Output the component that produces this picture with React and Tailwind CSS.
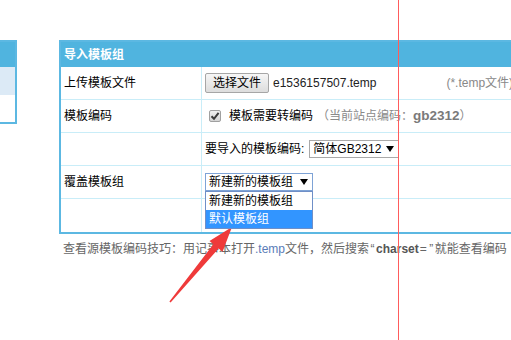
import React from "react";

const font = { fontFamily: '"Liberation Sans", "Noto Sans CJK SC", sans-serif' };

function Arrow() {
  return (
    <svg width="10" height="8" viewBox="0 0 10 8" className="shrink-0">
      <polygon points="1,1 9,1 5,7" fill="#000" />
    </svg>
  );
}

export default function App() {
  return (
    <div className="relative w-[511px] h-[340px] overflow-hidden bg-white text-[12px] text-black" style={font}>
      <div className="pt-[40px] flex items-start">
        {/* left panel */}
        <div className="w-[17px] shrink-0 border-t-2 border-r-2 border-b-2 border-[#5cb8e2]">
          <div className="h-[25px] bg-[#50b4df]"></div>
          <div className="h-[28px] bg-[#dceaf6]"></div>
          <div className="h-[27px] bg-white"></div>
        </div>

        {/* main table */}
        <div className="ml-[42px] w-[520px] shrink-0">
          <div className="border-2 border-[#5cb8e2]">
            <div className="h-[25px] bg-[#50b4df] flex items-center pl-[3px] font-bold text-white leading-none">
              导入模板组
            </div>
            {/* row 1 */}
            <div className="h-[33px] flex border-b border-[#c9edf8]">
              <div className="w-[141px] shrink-0 border-r border-[#c9edf8] flex items-center pl-[3px]">上传模板文件</div>
              <div className="flex items-center pl-[3px]">
                <div className="w-[64px] h-[20px] flex items-center justify-center rounded-[2px] border border-[#a6a6a6] bg-gradient-to-b from-[#f6f6f6] to-[#dddddd] text-black">
                  选择文件
                </div>
                <span className="ml-[4px] text-[#222]">e1536157507.temp</span>
                <span className="ml-[70px] text-[#888] whitespace-nowrap">(*.temp文件)</span>
              </div>
            </div>
            {/* row 2 */}
            <div className="h-[33px] flex border-b border-[#c9edf8]">
              <div className="w-[141px] shrink-0 border-r border-[#c9edf8] flex items-center pl-[3px]">模板编码</div>
              <div className="flex items-center pl-[7px]">
                <span className="w-[12px] h-[12px] rounded-[2px] border border-[#a0a0a0] bg-gradient-to-b from-[#f0f0f0] to-[#d4d4d4] flex items-center justify-center">
                  <svg width="10" height="10" viewBox="0 0 10 10">
                    <path d="M1.5 5.2 L4 7.8 L8.6 1.8" fill="none" stroke="#3a3a3a" strokeWidth="2" />
                  </svg>
                </span>
                <span className="ml-[8px]">模板需要转编码</span>
                <span className="ml-[4px] text-[#8a8a8a] whitespace-nowrap flex items-center">
                  （当前站点编码：<b className="text-[#7a7a7a] text-[13.5px]">gb2312</b>）
                </span>
              </div>
            </div>
            {/* row 3 */}
            <div className="h-[33px] flex border-b border-[#c9edf8]">
              <div className="w-[141px] shrink-0 border-r border-[#c9edf8]"></div>
              <div className="flex items-center pl-[3px]">
                <span>要导入的模板编码:</span>
                <div className="ml-[5px] w-[90px] h-[18px] border border-[#a9a9a9] flex items-center justify-between pl-[3px] pr-[3px] bg-white">
                  <span>简体GB2312</span>
                  <Arrow />
                </div>
              </div>
            </div>
            {/* row 4 */}
            <div className="h-[33px] flex border-b border-[#c9edf8]">
              <div className="w-[141px] shrink-0 border-r border-[#c9edf8] flex items-center pl-[3px]">覆盖模板组</div>
              <div className="flex items-center pl-[3px]">
                <div className="relative w-[108px] h-[18px] border border-[#7ea3d6] flex items-center justify-between pl-[3px] pr-[3px] bg-white">
                  <span>新建新的模板组</span>
                  <Arrow />
                  <div className="absolute left-[-1px] top-[17px] w-[108px] border border-[#6f8fc7] bg-white z-10">
                    <div className="h-[18px] flex items-center pl-[3px]">新建新的模板组</div>
                    <div className="h-[18px] flex items-center pl-[3px] bg-[#3295ff] text-white">默认模板组</div>
                  </div>
                </div>
              </div>
            </div>
            {/* row 5 */}
            <div className="h-[33px] flex">
              <div className="w-[141px] shrink-0 border-r border-[#c9edf8]"></div>
              <div></div>
            </div>
          </div>
          <div className="mt-[7px] ml-[4px] text-[#666] whitespace-nowrap leading-[16px]">
            查看源模板编码技巧：用记事本打开<span className="text-[#5a7cb8]">.temp</span>文件，然后搜索
            <span className="inline-block w-[7px] text-center">“</span>
            <b className="text-[#555]">charset</b>
            <span className="inline-block w-[9px] text-center">=</span>
            <span className="inline-block w-[7px] text-center">”</span>就能查看编码
          </div>
        </div>
      </div>

      {/* red guide line */}
      <div className="absolute left-[398px] top-0 w-[1px] h-[340px] bg-[#ff5c5c]"></div>

      {/* red arrow */}
      <svg className="absolute left-0 top-0 pointer-events-none" width="511" height="340">
        <polygon
          points="232,227 222.5,251.8 218.6,248.6 170.6,302.6 169.4,301.4 213.4,244.2 209.5,241"
          fill="#ef3a3a"
        />
      </svg>
    </div>
  );
}
